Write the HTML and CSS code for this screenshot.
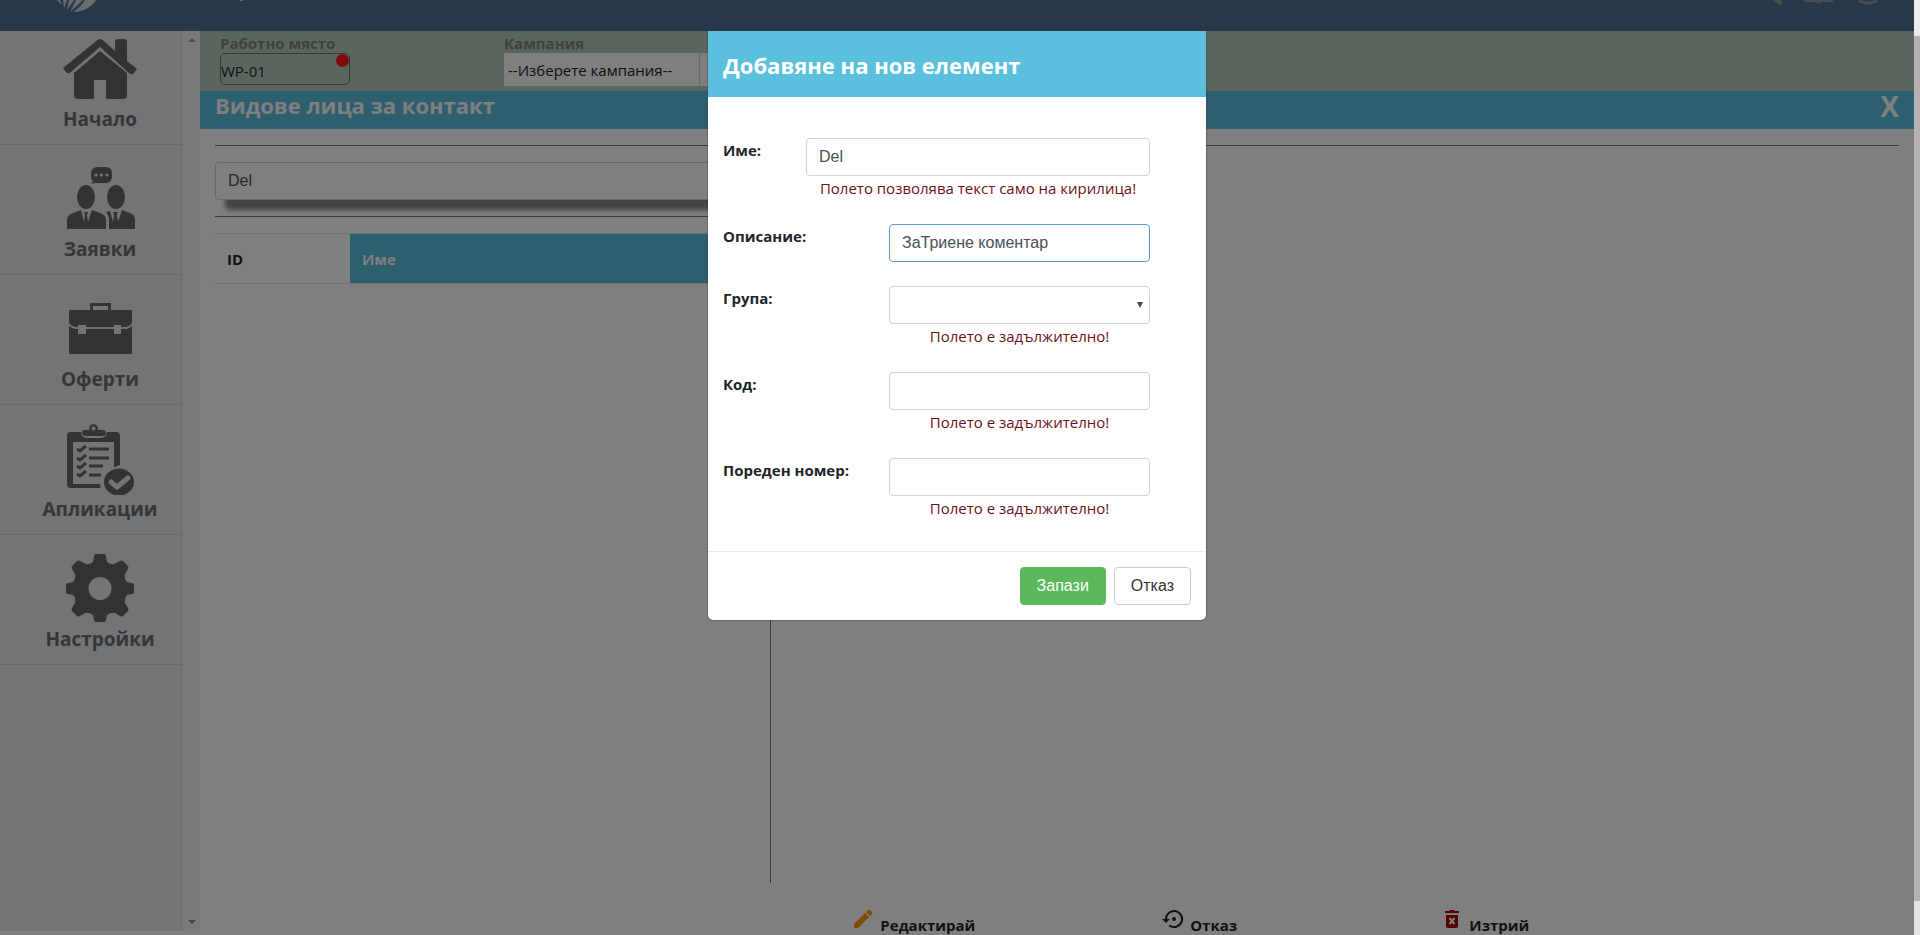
FILE: index.html
```html
<!DOCTYPE html>
<html lang="bg">
<head>
<meta charset="utf-8">
<title>Видове лица за контакт</title>
<link rel="stylesheet" href="styles.css">
</head>
<body>
<div class="app">
  <header class="topbar">
    <svg class="logo" width="200" height="31" viewBox="0 0 200 31" aria-hidden="true">
      <g fill="#d4d8dc">
        <path d="M1 0h3l2 5zM7 0h4L8 8zM13 0h5l-7 10zM20 0h7L14 12zM29 0h11C36 7 27 12 17 12 22 9 26 5 29 0z"/>
        <path d="M183 0h5l-2 1h-2z"/>
      </g>
    </svg>
    <svg class="tools" width="112" height="31" viewBox="0 0 112 31" aria-hidden="true">
      <path d="M0 0h8l1 4-3 1z" fill="#989ba2"/>
      <path d="M31 0h29v2H48l-2 2-3-2H31z" fill="#989ba2"/>
      <path d="M86 0c4 4 14 4 18 0" fill="none" stroke="#989ba2" stroke-width="3"/>
    </svg>
  </header>

  <div class="layout">
    <nav class="sidebar">
      <div class="menu">
        <a class="menu-item" href="#home">
          <svg width="76" height="68" viewBox="0 0 76 68" aria-hidden="true">
            <path d="M38 5q2 0 5 3l10 9V8q0-3 3-3h6q3 0 3 3v19l10 8-4 5q-2 1-4-1L38 13 9 38q-2 2-4 1l-4-5L33 8q3-3 5-3z"/>
            <path d="M38 17 65 39v22q0 4-4 4H44V46H32v19H16q-4 0-4-4V39z"/>
          </svg>
          <span>Начало</span>
        </a>
        <a class="menu-item" href="#requests">
          <svg width="76" height="68" viewBox="0 0 76 68" aria-hidden="true">
            <path d="M36 4h8q6 0 6 7v2q0 7-6 7H33l-4 1 2-3q-2-1-2-5v-2q0-7 7-7z"/>
            <g class="cut"><circle cx="34" cy="12" r="1.600"/><circle cx="39.500" cy="12" r="1.600"/><circle cx="45" cy="12" r="1.600"/></g>
            <ellipse cx="24" cy="34" rx="9" ry="12"/><ellipse cx="54" cy="34" rx="9" ry="12"/>
            <path d="M5 66V57q0-5 6-7l8-3 3 12 1-7-1-3h4l-1 3 1 7 4-12 8 3q6 2 6 7v9z"/>
            <path d="M47 66v-9q0-5-3-8l4-1 3 11 1-7-1-3h5l-1 3 1 7 4-12 8 3q5 2 5 7v9z"/>
          </svg>
          <span>Заявки</span>
        </a>
        <a class="menu-item" href="#offers">
          <svg width="76" height="68" viewBox="0 0 76 68" aria-hidden="true">
            <g transform="translate(0 7)">
              <path d="M7 10h21V3h21v7h21v44H7zM31 6v4h15V6z" fill-rule="evenodd"/>
              <path class="cut-line" d="M6 23q3 5 9 5h48q5 0 8-5"/>
              <path class="cut" d="M16 25h8v9h-8zM52 25h7v9h-7z"/>
            </g>
          </svg>
          <span>Оферти</span>
        </a>
        <a class="menu-item" href="#applications">
          <svg width="76" height="72" viewBox="0 0 76 72" aria-hidden="true">
            <path d="M8 9h11q0 6 7 6h12q6 0 7-6h9q4 0 4 4v29q-4 1-6 3V19H11v42h27q0 3 1 4H9q-4 0-4-4V13q0-4 3-4z"/>
            <path d="M23 7h4q0-6 4.500-6T36 7h4q4 0 4 3t-4 3H24q-4 0-4-3t3-3zM31.500 3.500a2 2 0 1 0 .1 0z" fill-rule="evenodd"/>
            <path class="line" d="M15 26l3 2 6-5M27 26h20M15 35l3 2 6-5M27 35h20M15 43l3 2 6-5M27 43h14M15 51l3 2 6-5M27 52h12"/>
            <ellipse cx="57" cy="59" rx="15" ry="13.500"/>
            <path class="check" d="m49 59 6 5 11-9"/>
          </svg>
          <span>Апликации</span>
        </a>
        <a class="menu-item" href="#settings">
          <svg width="76" height="72" viewBox="0 0 76 72" aria-hidden="true">
            <path fill-rule="evenodd" d="M34 1h8q2 0 2 3l1 5q5 4 9 1l4-2q2-1 3 0l5 5q1 2 0 3l-3 5q-1 5 2 8l5 1q2 0 2 2v7q0 2-2 2l-5 1q-3 4-2 8l3 5q1 2 0 3l-5 5q-1 1-3 0l-5-3q-4-1-8 2l-1 5q0 2-2 2h-8q-2 0-2-2l-1-5q-4-3-8-2l-5 3q-2 1-3 0l-5-5q-1-1 0-3l3-5q1-5-2-8l-5-1q-2 0-2-2v-7q0-2 2-2l5-1q3-4 2-8l-3-5q-1-1 0-3l5-5q1-1 3 0l4 2q4 3 9-1l1-5q0-3 2-3zM38 24a11.500 11.500 0 1 0 .1 0z"/>
          </svg>
          <span>Настройки</span>
        </a>
      </div>
      <div class="scroll" aria-hidden="true"><i class="arrow up"></i><i class="arrow down"></i></div>
    </nav>

    <main class="main">
      <div class="context">
        <div class="context-field">
          <label for="workplace">Работно място</label>
          <div class="workplace"><input id="workplace" value="WP-01" readonly><i class="dot"></i></div>
        </div>
        <div class="context-field">
          <label for="campaign">Кампания</label>
          <div class="campaign">
            <select id="campaign"><option>--Изберете кампания--</option></select>
            <button type="button" aria-label="Избор"></button>
          </div>
        </div>
      </div>
      <div class="title">
        <h1>Видове лица за контакт</h1>
        <button type="button" class="close">X</button>
      </div>
      <div class="content">
        <section class="list">
          <div class="search"><input value="Del" aria-label="Търсене"></div>
          <table class="grid">
            <thead><tr><th class="col-id">ID</th><th class="col-name">Име</th></tr></thead>
          </table>
        </section>
      </div>
      <div class="actions">
        <button type="button">
          <svg width="22" height="22" viewBox="0 0 22 22" fill="#ff9800" aria-hidden="true"><path d="M2 16 13 5l4 4L6 20H2zM14 4l2-2q1-1 2 0l2 2q1 1 0 2l-2 2z"/></svg>Редактирай
        </button>
        <button type="button">
          <svg width="22" height="22" viewBox="0 0 22 22" fill="#222" aria-hidden="true"><path d="M12 2a9 9 0 0 0-9 9H0l4 4 4-4H5a7 7 0 1 1 3 5.700L6.500 18A9 9 0 1 0 12 2z"/><circle cx="12" cy="11" r="2"/></svg>Отказ
        </button>
        <button type="button">
          <svg width="22" height="22" viewBox="0 0 22 22" aria-hidden="true"><path fill="#b00000" d="M4 3h4l1-1h4l1 1h4v2H4zM5 7h12v11q0 2-2 2H7q-2 0-2-2z"/><path d="m8.500 10 5 6m0-6-5 6" stroke="#fff" stroke-width="2"/></svg>Изтрий
        </button>
      </div>
    </main>
  </div>

  <div class="backdrop">
    <form class="modal" role="dialog" aria-labelledby="dialog-title">
      <h2 class="modal-title" id="dialog-title">Добавяне на нов елемент</h2>
      <div class="modal-body">
        <div class="row row-wide">
          <label for="name">Име:</label>
          <div><input id="name" value="Del"><p class="error">Полето позволява текст само на кирилица!</p></div>
        </div>
        <div class="row">
          <label for="description">Описание:</label>
          <div><input id="description" class="focused" value="ЗаТриене коментар"></div>
        </div>
        <div class="row">
          <label for="group">Група:</label>
          <div>
            <div class="select"><select id="group"><option></option></select></div>
            <p class="error">Полето е задължително!</p>
          </div>
        </div>
        <div class="row">
          <label for="code">Код:</label>
          <div><input id="code"><p class="error">Полето е задължително!</p></div>
        </div>
        <div class="row">
          <label for="order">Пореден номер:</label>
          <div><input id="order"><p class="error">Полето е задължително!</p></div>
        </div>
      </div>
      <div class="modal-footer">
        <button type="button" class="btn btn-save">Запази</button>
        <button type="button" class="btn">Отказ</button>
      </div>
    </form>
  </div>
</div>
<div class="page-scroll" aria-hidden="true"></div>
</body>
</html>
```
FILE: styles.css
```css
* { box-sizing: border-box; }
body {
  margin: 0;
  min-height: 100vh;
  display: flex;
  font-family: "Open Sans", "Noto Sans", sans-serif;
  font-size: 15px;
  line-height: 24px;
  color: #212529;
  background: #fff;
}
input, select, button { font: inherit; color: inherit; margin: 0; }
button { cursor: pointer; }
h1, h2, p { margin: 0; }

.app {
  position: relative;
  flex: 1;
  display: flex;
  flex-direction: column;
  height: 100vh;
  overflow: hidden;
}
.page-scroll {
  width: 6px;
  background: linear-gradient(#ececec 36px, #b5b0b1 36px, #b5b0b1 calc(100% - 34px), #e4e4e4 calc(100% - 34px));
}

.topbar {
  flex: none;
  height: 31px;
  padding: 0 29px 0 56px;
  display: flex;
  justify-content: space-between;
  background: #547294;
}

.layout { flex: 1; display: flex; min-height: 0; }

.sidebar { flex: none; width: 200px; display: flex; margin-bottom: 4px; }
.menu {
  flex: 1;
  background: #e5e8eb;
  border-right: 2px solid #e1e2e4;
}
.menu-item {
  height: 130px;
  padding: 18px 0 0 19px;
  border-bottom: 1px solid #d0d2d6;
  display: flex;
  flex-direction: column;
  align-items: center;
  font-size: 19px;
  line-height: 28px;
  font-weight: 700;
  color: #6c6c6c;
  text-decoration: none;
}
.menu-item:first-child { height: 114px; padding-top: 3px; }
.menu-item span { margin-top: auto; padding-bottom: 11px; }
.menu-item svg { flex: none; fill: #666; }
.menu-item .cut { fill: #e5e8eb; }
.menu-item .cut-line { fill: none; stroke: #e5e8eb; stroke-width: 2; }
.menu-item .line { fill: none; stroke: #666; stroke-width: 3; }
.menu-item .check { fill: none; stroke: #e5e8eb; stroke-width: 5; stroke-linecap: round; }
.scroll {
  width: 17px;
  padding: 7px 0;
  background: #f2f2f2;
  display: flex;
  flex-direction: column;
  align-items: center;
  justify-content: space-between;
}
.arrow { border: 4px solid transparent; }
.up { border-top: 0; border-bottom-color: #a0a0a0; }
.down { border-bottom: 0; border-top-color: #888; }

.main { flex: 1; min-width: 0; display: flex; flex-direction: column; }
.context {
  height: 60px;
  flex: none;
  padding: 0 20px;
  display: flex;
  background: #b4ccba;
}
.context-field { width: 284px; }
.context-field label { display: block; height: 22px; font-weight: 700; color: #7c827e; }
.workplace { position: relative; width: 130px; }
.workplace input {
  display: block;
  width: 100%;
  height: 32px;
  padding: 3px 0 0;
  background: transparent;
  border: 1px solid #66736a;
  border-radius: 5px;
}
.dot {
  position: absolute;
  top: 1px;
  right: 1px;
  width: 13px;
  height: 13px;
  border-radius: 50%;
  background: #ff1414;
}
.campaign { display: flex; height: 33px; }
.campaign select {
  width: 196px;
  padding: 0 4px;
  appearance: none;
  border: 0;
  border-right: 1px solid #ccc;
  background: #fff;
}
.campaign button { width: 34px; border: 0; background: #fff; }

.title {
  flex: none;
  height: 38px;
  padding: 0 15px;
  display: flex;
  justify-content: space-between;
  background: #5bc0de;
  color: #fff;
}
.title h1 { font-size: 22px; line-height: 28px; font-weight: 700; }
.close { padding: 0; border: 0; background: none; font-size: 28px; line-height: 30px; font-weight: 700; align-self: flex-start; }

.content {
  flex: 1;
  margin: 16px 15px;
  border-top: 1px solid #777;
}
.list { width: 33%; height: 100%; border-right: 1px solid #777; }
.search { padding: 16px 0; border-bottom: 1px solid #777; }
.search input {
  display: block;
  width: 100%;
  height: 38px;
  padding: 6px 12px;
  font: 16px/24px "Liberation Sans", Arial, sans-serif;
  color: #495057;
  background: #fff;
  border: 1px solid #ced4da;
  border-radius: 4px;
  box-shadow: 10px 10px 5px #888;
}
.grid { width: 100%; margin-top: 16px; border-collapse: collapse; }
.grid th {
  height: 50px;
  padding: 0 12px;
  text-align: left;
  border-top: 1px solid #dee2e6;
  border-bottom: 1px solid #dee2e6;
}
.grid .col-id { width: 135px; }
.grid .col-name { background: #5bc0de; color: #fff; }

.actions {
  flex: none;
  height: 36px;
  margin-left: 571px;
  display: grid;
  grid-template-columns: repeat(4, 1fr);
}
.actions button {
  justify-self: center;
  align-self: end;
  display: flex;
  align-items: flex-end;
  gap: 6px;
  padding: 0;
  border: 0;
  background: none;
  font-weight: 700;
  line-height: 20px;
}
.actions svg { margin-bottom: 5px; }

.backdrop {
  position: absolute;
  inset: 0;
  padding-top: 31px;
  background: rgba(0, 0, 0, .5);
}
.modal {
  width: 498px;
  margin: 0 auto;
  background: #fff;
  border-radius: 0 0 5px 5px;
  overflow: hidden;
  box-shadow: 0 0 2px #333;
}
.modal-title {
  padding: 19px 15px 17px;
  font-size: 22px;
  line-height: 30px;
  font-weight: 700;
  color: #fff;
  background: #5bc0de;
}
.modal-body { padding: 41px 56px 7px 15px; }
.row { display: grid; grid-template-columns: 166px 1fr; margin-bottom: 24px; }
.row-wide { grid-template-columns: 83px 1fr; }
.row label { font-weight: 700; }
.row input, .row select {
  display: block;
  width: 100%;
  height: 38px;
  padding: 6px 12px;
  font: 16px/24px "Liberation Sans", Arial, sans-serif;
  color: #495057;
  background: #fff;
  border: 1px solid #ced4da;
  border-radius: 4px;
}
.row .focused { border-color: #5b9dd9; }
.row select { appearance: none; }
.select { position: relative; }
.select::after {
  content: "";
  position: absolute;
  right: 7px;
  top: 16px;
  border: 3px solid transparent;
  border-top: 6px solid #444;
  border-bottom: 0;
}
.error { height: 24px; text-align: center; color: #700f1a; }
.modal-footer {
  display: flex;
  justify-content: flex-end;
  gap: 8px;
  padding: 15px;
  border-top: 1px solid #e9ecef;
}
.btn {
  height: 38px;
  padding: 0 16px;
  font: 16px/24px "Liberation Sans", Arial, sans-serif;
  color: #333;
  background: #fff;
  border: 1px solid #ccc;
  border-radius: 4px;
}
.btn-save { color: #fff; background: #5cb85c; border-color: #5cb85c; }
```
